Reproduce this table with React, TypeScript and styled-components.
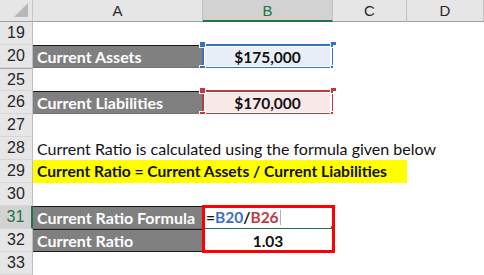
import styled, { createGlobalStyle } from "styled-components"

const GlobalStyle = createGlobalStyle`
  body {
    margin: 0;
    background: #fff;
    font-family: "Lato", "Liberation Sans", sans-serif;
  }
`

const rows = [
  { n: 19 },
  { n: 20, label: "Current Assets", value: "$175,000", frame: "blue" },
  { n: 25 },
  { n: 26, label: "Current Liabilities", value: "$170,000", frame: "red" },
  { n: 27 },
  { n: 28, note: "Current Ratio is calculated using the formula given below" },
  { n: 29, highlight: "Current Ratio = Current Assets / Current Liabilities" },
  { n: 30 },
  { n: 31, label: "Current Ratio Formula", formula: true },
  { n: 32, label: "Current Ratio", value: "1.03" },
  { n: 33 },
]

const frameColors: Record<string, { line: string; fill: string }> = {
  blue: { line: "#3a6fc8", fill: "#e8eef8" },
  red: { line: "#c0393f", fill: "#f8e8e8" },
}

const App = () => {
  return (
    <>
      <GlobalStyle />
      <Sheet>
        <Corner>
          <CornerTriangle />
        </Corner>
        <ColHeader>A</ColHeader>
        <ColHeader $active>B</ColHeader>
        <ColHeader>C</ColHeader>
        <ColHeader>D</ColHeader>

        {rows.map((r) => (
          <Row key={r.n} {...r} />
        ))}
      </Sheet>
    </>
  )
}

export default App

type RowProps = {
  n: number
  label?: string
  value?: string
  frame?: string
  note?: string
  highlight?: string
  formula?: boolean
}

const Row = ({ n, label, value, frame, note, highlight, formula }: RowProps) => {
  const active = n === 31

  if (highlight) {
    return (
      <>
        <RowHeader $active={active}>{n}</RowHeader>
        <Highlight>{highlight}</Highlight>
        <Cell />
      </>
    )
  }

  return (
    <>
      <RowHeader $active={active} $hiddenAbove={n === 25}>{n}</RowHeader>
      {label ? (
        <LabelCell $last={n === 32}>{label}</LabelCell>
      ) : (
        <Cell>{note && <Note>{note}</Note>}</Cell>
      )}
      <ValueCell $fill={frame ? frameColors[frame].fill : undefined}>
        {value}
        {formula && (
          <>
            <Formula>
              =<Ref $color="#3a6fc8">B20</Ref>/<Ref $color="#c0393f">B26</Ref>
              <Caret />
            </Formula>
            <ActiveLine />
            <RedBox />
          </>
        )}
        {frame && (
          <>
            <Frame $color={frameColors[frame].line} />
            <Handle $color={frameColors[frame].line} $top $left />
            <Handle $color={frameColors[frame].line} $top />
            <Handle $color={frameColors[frame].line} $left />
            <Handle $color={frameColors[frame].line} />
          </>
        )}
      </ValueCell>
      <Cell />
      <Cell />
    </>
  )
}

const Sheet = styled.div`
  display: grid;
  grid-template-columns: 33px 170px 130px 74px 77px;
  grid-template-rows: 22px;
  grid-auto-rows: 23px;
  width: 484px;
  height: 275px;
  overflow: hidden;
`

const Corner = styled.div`
  position: relative;
  background: #e6e6e6;
  border-right: 1px solid #c8c8c8;
  border-bottom: 1px solid #a0a0a0;
`

const CornerTriangle = styled.div`
  position: absolute;
  right: 4px;
  bottom: 4px;
  width: 0;
  height: 0;
  border-left: 14px solid transparent;
  border-bottom: 14px solid #b8b8b8;
`

const ColHeader = styled.div<{ $active?: boolean }>`
  display: flex;
  align-items: center;
  justify-content: center;
  background: ${(p) => (p.$active ? "#d2d2d2" : "#e6e6e6")};
  border-right: 1px solid #c0c0c0;
  border-bottom: ${(p) => (p.$active ? "2px solid #217346" : "1px solid #a0a0a0")};
  color: ${(p) => (p.$active ? "#217346" : "#262626")};
  font-family: "Liberation Sans", sans-serif;
  font-size: 15px;
  padding-top: ${(p) => (p.$active ? "1px" : "0")};
`

const RowHeader = styled.div<{ $active?: boolean; $hiddenAbove?: boolean }>`
  display: flex;
  align-items: center;
  justify-content: center;
  background: ${(p) => (p.$active ? "#d2d2d2" : "#e6e6e6")};
  border-right: ${(p) => (p.$active ? "2px solid #217346" : "1px solid #bdbdbd")};
  border-bottom: 1px solid #d6d6d6;
  border-top: ${(p) => (p.$hiddenAbove ? "1px solid #a8a8a8" : "none")};
  color: ${(p) => (p.$active ? "#217346" : "#262626")};
  font-family: "Liberation Sans", sans-serif;
  font-size: 16px;
`

const Cell = styled.div`
  position: relative;
  background: #fff;
`

const Note = styled.span`
  position: absolute;
  z-index: 1;
  left: 4px;
  top: 0;
  line-height: 23px;
  white-space: nowrap;
  font-size: 16px;
  color: #111;
`

const Highlight = styled.div`
  grid-column: span 3;
  background: #ffff00;
  padding-left: 4px;
  line-height: 23px;
  font-size: 15.6px;
  font-weight: 700;
  color: #111;
  white-space: nowrap;
`

const LabelCell = styled.div<{ $last?: boolean }>`
  background: #808080;
  border-top: 1px solid #1a1a1a;
  border-bottom: ${(p) => (p.$last ? "1px solid #1a1a1a" : "1px solid #707070")};
  color: #fff;
  font-size: 16px;
  font-weight: 700;
  padding-left: 4px;
  line-height: 21px;
  white-space: nowrap;
`

const ValueCell = styled.div<{ $fill?: string }>`
  position: relative;
  display: flex;
  align-items: center;
  justify-content: center;
  background: ${(p) => p.$fill || "#fff"};
  margin: ${(p) => (p.$fill ? "2px 3px 2px 2px" : "0")};
  font-size: 15.5px;
  font-weight: 700;
  color: #111;
`

const Frame = styled.div<{ $color: string }>`
  position: absolute;
  inset: -3px -4px -3px -3px;
  border: 2px solid ${(p) => p.$color};
  box-shadow: inset 0 0 0 1px #fff;
  pointer-events: none;
`

const Handle = styled.div<{ $color: string; $top?: boolean; $left?: boolean }>`
  position: absolute;
  width: 5px;
  height: 5px;
  background: ${(p) => p.$color};
  outline: 1px solid #fff;
  ${(p) => (p.$top ? "top: -5px;" : "bottom: -5px;")}
  ${(p) => (p.$left ? "left: -5px;" : "right: -6px;")}
`

const Formula = styled.div`
  position: absolute;
  left: 3px;
  top: 0;
  line-height: 23px;
  font-weight: 700;
  color: #111;
  display: flex;
  align-items: center;
`

const Ref = styled.span<{ $color: string }>`
  color: ${(p) => p.$color};
`

const Caret = styled.span`
  display: inline-block;
  width: 1px;
  height: 15px;
  margin-left: 1px;
  background: #b0b0b0;
`

const ActiveLine = styled.div`
  position: absolute;
  left: 0;
  right: 0;
  bottom: -1px;
  height: 2px;
  background: #217346;

  &::after {
    content: "";
    position: absolute;
    right: -3px;
    top: -2px;
    width: 5px;
    height: 5px;
    background: #217346;
  }
`

const RedBox = styled.div`
  position: absolute;
  left: -1px;
  top: -1px;
  width: 133px;
  height: 48px;
  box-sizing: border-box;
  border: 3px solid #ff0000;
  pointer-events: none;
  z-index: 2;
`
